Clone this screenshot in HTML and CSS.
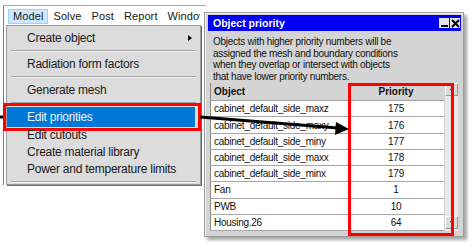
FILE: index.html
```html
<!DOCTYPE html>
<html lang="en">
<head>
    <meta charset="UTF-8">
    <title>Model menu - Object priority</title>
    <link rel="stylesheet" href="styles.css">
</head>
<body>
<div class="desk">

    <div class="app">
        <div class="menubar">
            <span class="menubar-item active">Model</span>
            <span class="menubar-item">Solve</span>
            <span class="menubar-item">Post</span>
            <span class="menubar-item">Report</span>
            <span class="menubar-item">Window</span>
        </div>
        <div class="dropdown">
            <div class="menu-item big">Create object <span class="sub-arrow"></span></div>
            <div class="menu-sep"></div>
            <div class="menu-item big">Radiation form factors</div>
            <div class="menu-sep"></div>
            <div class="menu-item big">Generate mesh</div>
            <div class="menu-sep"></div>
            <div class="menu-item selected">Edit priorities</div>
            <div class="menu-item">Edit cutouts</div>
            <div class="menu-item">Create material library</div>
            <div class="menu-item">Power and temperature limits</div>
            <div class="menu-sep last"></div>
        </div>
    </div>

    <div class="dialog">
        <div class="titlebar">
            <span class="title">Object priority</span>
            <span class="tbtn">
                <svg width="9" height="9" viewBox="0 0 9 9"><rect x="1" y="6" width="7" height="2" fill="#000"/></svg>
            </span>
            <span class="tbtn">
                <svg width="9" height="9" viewBox="0 0 9 9"><path d="M1 1L8 8M8 1L1 8" stroke="#000" stroke-width="2"/></svg>
            </span>
        </div>
        <p class="desc">
            Objects with higher priority numbers will be<br>
            assigned the mesh and boundary conditions<br>
            when they overlap or intersect with objects<br>
            that have lower priority numbers.
        </p>
        <div class="list">
            <table class="grid">
                <tr><th class="col-obj">Object</th><th class="col-pri">Priority</th></tr>
                <tr><td>cabinet_default_side_maxz</td><td class="num">175</td></tr>
                <tr><td>cabinet_default_side_maxy</td><td class="num">176</td></tr>
                <tr><td>cabinet_default_side_miny</td><td class="num">177</td></tr>
                <tr><td>cabinet_default_side_maxx</td><td class="num">178</td></tr>
                <tr><td>cabinet_default_side_minx</td><td class="num">179</td></tr>
                <tr><td>Fan</td><td class="num">1</td></tr>
                <tr><td>PWB</td><td class="num">10</td></tr>
                <tr><td>Housing.26</td><td class="num">64</td></tr>
            </table>
            <div class="scroll">
                <span class="sbtn up"></span>
                <span class="track"></span>
                <span class="sbtn down"></span>
            </div>
        </div>
        <div class="callout"></div>
    </div>

    <svg class="arrow" width="472" height="245" viewBox="0 0 472 245">
        <line x1="0" y1="117" x2="3" y2="117" stroke="#000" stroke-width="3"/>
        <line x1="200" y1="117" x2="338" y2="128" stroke="#000" stroke-width="3"/>
        <polygon points="349,129 336,122 335,135" fill="#000"/>
    </svg>

</div>
</body>
</html>
```

FILE: styles.css
```css
body {
    margin: 0;
    padding: 0;
    background-color: #ffffff;
    font-family: 'Liberation Sans', Arial, sans-serif;
    color: #1a1a1a;
}
.desk {
    position: relative;
    width: 472px;
    height: 245px;
    overflow: hidden;
}

/* main window with the open Model menu */
.app {
    margin: 5px 0 0 3px;
    width: 202px;
    border-top: 1px solid #a9a9a9;
    border-left: 1px solid #7d7d7d;
}
.menubar {
    display: flex;
    width: 196px;
    height: 19px;
    padding: 3px 0 0 4px;
    box-sizing: border-box;
    overflow: hidden;
    font-size: 11px;
    letter-spacing: 0.1px;
    white-space: nowrap;
}
.menubar-item {
    height: 15px;
    line-height: 13px;
    padding: 0 4px;
    border: 1px solid transparent;
    box-sizing: border-box;
}
.menubar-item.active {
    background-color: #cce8ff;
    border-color: #99d1ff;
}
.dropdown {
    margin-left: 2px;
    width: 195px;
    padding-bottom: 1px;
    box-sizing: border-box;
    background-color: #dcdcdc;
    border: 1px solid #9a9a9a;
    box-shadow: 1px 1px 0 #6a6a6a;
    font-size: 12px;
    letter-spacing: -0.25px;
}
.menu-item {
    position: relative;
    line-height: 17px;
    padding-left: 20px;
    margin-right: 5px;
}
.menu-item.big {
    line-height: 24px;
}
.menu-item.selected {
    line-height: 20px;
    margin-top: 3px;
    background-color: #0078d7;
    color: #eef5fc;
}
.menu-item.selected::after {
    content: "";
    position: absolute;
    top: -4px;
    bottom: -4px;
    left: -4px;
    right: -6px;
    border: 3px solid #ff0000;
}
.sub-arrow {
    position: absolute;
    right: 3px;
    top: 9px;
    border-left: 4px solid #000;
    border-top: 3px solid transparent;
    border-bottom: 3px solid transparent;
}
.menu-sep {
    height: 0;
    margin: 0 4px;
    border-top: 1px solid #a5a5a5;
    border-bottom: 1px solid #f4f4f4;
}
.menu-sep.last {
    margin-top: 3px;
}

/* Object priority dialog */
.dialog {
    position: absolute;
    left: 204px;
    top: 12px;
    width: 260px;
    height: 225px;
    padding: 2px 2px 2px 3px;
    box-sizing: border-box;
    background-color: #d4d4d4;
    border: 1px solid #9c9c9c;
    box-shadow: inset 1px 1px 0 #f2f2f2, 3px 3px 3px rgba(0, 0, 0, 0.35);
    font-size: 10px;
    color: #111;
}
.titlebar {
    display: flex;
    align-items: center;
    height: 16px;
    padding: 0 1px 0 5px;
    background-color: #0000f5;
}
.title {
    flex: 1;
    color: #ffffff;
    font-weight: bold;
    font-size: 10.5px;
}
.tbtn {
    display: flex;
    width: 10px;
    height: 10px;
    margin-left: 1px;
    align-items: center;
    justify-content: center;
    background-color: #e4e4e4;
}
.desc {
    margin: 0;
    padding: 5px 5px 0;
    line-height: 11.5px;
    letter-spacing: -0.27px;
}
.list {
    display: flex;
    height: 148px;
    margin: 1px 0 0 2px;
}
.grid {
    width: 234px;
    border-collapse: collapse;
    table-layout: fixed;
    border-left: 1px solid #8a8a8a;
    letter-spacing: -0.27px;
}
.grid th {
    height: 17px;
    padding: 0 3px;
    background-color: #d4d4d4;
    border-bottom: 1px solid #a0a0a0;
    font-weight: bold;
    letter-spacing: 0;
    text-align: left;
}
.grid th.col-obj {
    width: 131px;
}
.grid th.col-pri {
    text-align: center;
}
.grid td {
    height: 15px;
    padding: 0 3px;
    background-color: #ffffff;
    border-bottom: 1px solid #a8a8a8;
    white-space: nowrap;
    overflow: hidden;
}
.grid td.num {
    text-align: center;
}
.scroll {
    display: flex;
    flex-direction: column;
    width: 13px;
    margin-left: 1px;
    background-color: #e9e9e9;
}
.track {
    flex: 1;
}
.sbtn {
    position: relative;
    height: 13px;
    box-sizing: border-box;
    background-color: #dadada;
    border: 1px solid #9a9a9a;
    border-top-color: #ffffff;
    border-left-color: #ffffff;
}
.sbtn.down {
    margin-bottom: 2px;
}
.sbtn::after {
    content: "";
    position: absolute;
    left: 4px;
    border-left: 2px solid transparent;
    border-right: 2px solid transparent;
}
.sbtn.up::after {
    top: 3px;
    border-bottom: 3px solid #000;
}
.sbtn.down::after {
    top: 4px;
    border-top: 3px solid #000;
}
.callout {
    position: absolute;
    left: 143px;
    top: 70px;
    width: 106px;
    height: 153px;
    box-sizing: border-box;
    border: 3px solid #ff0000;
}

.arrow {
    position: absolute;
    left: 0;
    top: 0;
    pointer-events: none;
}
```
